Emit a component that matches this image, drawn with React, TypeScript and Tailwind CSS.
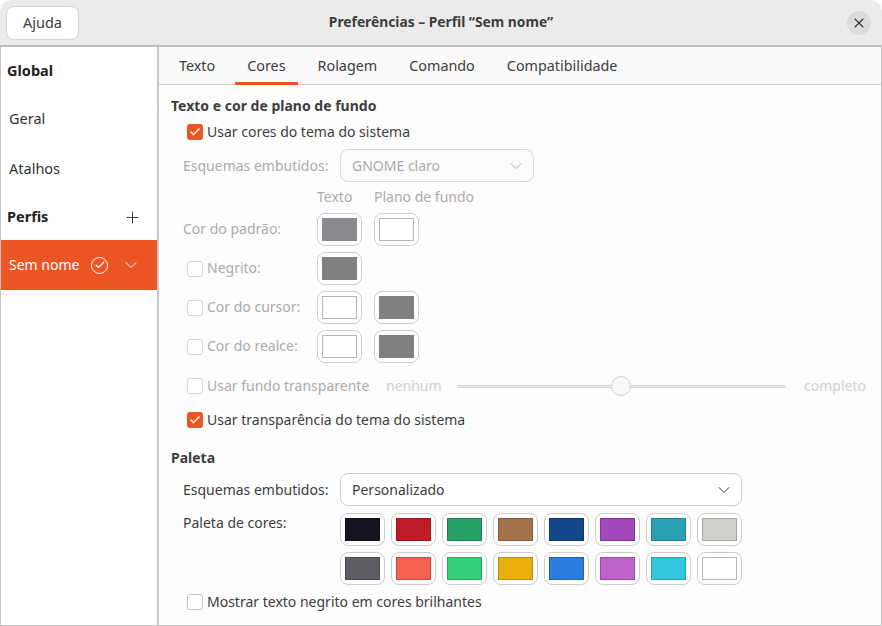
import { Check, ChevronDown, Plus, X } from "lucide-react";

const darkPalette = [
  ["bg-[#171421]", "border-[#121019]"],
  ["bg-[#c01c28]", "border-[#9a1620]"],
  ["bg-[#26a269]", "border-[#1e8254]"],
  ["bg-[#a2734c]", "border-[#825c3d]"],
  ["bg-[#12488b]", "border-[#0e3a6f]"],
  ["bg-[#a347ba]", "border-[#823995]"],
  ["bg-[#2aa1b3]", "border-[#22818f]"],
  ["bg-[#d0cfcc]", "border-[#a6a6a3]"],
];

const lightPalette = [
  ["bg-[#5e5c64]", "border-[#4b4a50]"],
  ["bg-[#f66151]", "border-[#c54e41]"],
  ["bg-[#33d17a]", "border-[#29a762]"],
  ["bg-[#e9ad0c]", "border-[#ba8a0a]"],
  ["bg-[#2a7bde]", "border-[#2262b2]"],
  ["bg-[#c061cb]", "border-[#9a4ea2]"],
  ["bg-[#33c7de]", "border-[#299fb2]"],
  ["bg-[#ffffff]", "border-[#b4b4b4]"],
];

function Swatch({ fill, edge }: { fill: string; edge: string }) {
  return (
    <div className="flex h-[33px] w-[45px] items-center justify-center rounded-lg border border-[#cdcdcd] bg-white">
      <div className={`h-[23px] w-[35px] border ${fill} ${edge}`} />
    </div>
  );
}

function Checkbox({ checked, faded }: { checked?: boolean; faded?: boolean }) {
  if (checked) {
    return (
      <div className="flex h-4 w-4 shrink-0 items-center justify-center rounded-[3px] bg-[#ed5624]">
        <Check size={12} strokeWidth={3} className="text-white" />
      </div>
    );
  }
  return (
    <div
      className={`h-4 w-4 shrink-0 rounded-[3px] border bg-white ${faded ? "border-[#d6d6d6]" : "border-[#c4c4c4]"}`}
    />
  );
}

function ColorRow({
  label,
  boxed,
  swatches,
}: {
  label: string;
  boxed?: boolean;
  swatches: string[][];
}) {
  return (
    <div className="mt-[6px] flex h-[33px] items-center">
      <div className={`flex w-[134px] items-center gap-1 text-[#ababab] ${boxed ? "pl-1" : ""}`}>
        {boxed && <Checkbox faded />}
        <span className="pb-[3px]">{label}</span>
      </div>
      <div className="flex gap-3">
        {swatches.map(([fill, edge], i) => (
          <Swatch key={i} fill={fill} edge={edge} />
        ))}
      </div>
    </div>
  );
}

const gray = ["bg-[#7f7f7f]", "border-[#7f7f7f]"];
const blank = ["bg-white", "border-[#b4b4b4]"];

export default function App() {
  return (
    <div
      className="flex h-[626px] w-[882px] flex-col overflow-hidden rounded-t-xl bg-white text-[14px] text-[#3d3d3d]"
      style={{ fontFamily: '"Noto Sans", sans-serif' }}
    >
      <header className="grid h-[47px] shrink-0 grid-cols-[1fr_auto_1fr] items-center border-b-2 border-[#bfbfbf] bg-[#ebebeb] px-[6px]">
        <button className="h-[34px] w-[73px] rounded-lg border border-[#d2d2d2] bg-white text-[14.5px] text-[#3d3d3d]">
          Ajuda
        </button>
        <h1 className="text-[13.8px] font-bold text-[#3d3d3d]">Preferências – Perfil “Sem nome”</h1>
        <div className="mr-[5px] flex h-6 w-6 items-center justify-center justify-self-end rounded-full bg-[#dcdcdc]">
          <X size={16} strokeWidth={1.6} className="text-[#333]" />
        </div>
      </header>

      <div className="flex min-h-0 flex-1 border-x border-b border-[#c4c4c4]">
        <aside className="w-[158px] shrink-0 border-r-2 border-[#c8c8c8] bg-white text-[14.5px]">
          <div className="flex h-[47px] items-center pl-[6px] font-bold text-[#222]">Global</div>
          <div className="flex h-[50px] items-center pl-2 text-[#333]">Geral</div>
          <div className="flex h-[50px] items-center pl-2 text-[#333]">Atalhos</div>
          <div className="flex h-[46px] items-center justify-between pl-[6px] pr-[15px] font-bold text-[#222]">
            Perfis
            <Plus size={19} strokeWidth={1.2} className="text-[#333]" />
          </div>
          <div className="flex h-[50px] items-center bg-[#eb5523] pl-2 text-white">
            <span className="w-[82px] pb-[2px] text-[14px]">Sem nome</span>
            <div className="flex h-[17px] w-[17px] items-center justify-center rounded-full border border-white">
              <Check size={12} strokeWidth={2.2} />
            </div>
            <ChevronDown size={20} strokeWidth={1.2} className="ml-[13px]" />
          </div>
        </aside>

        <main className="min-w-0 flex-1 bg-[#fdfdfd]">
          <nav className="flex h-[38px] items-stretch border-b border-[#cfcfcf] bg-[#fafafa] pl-1 text-[14.35px]">
            {["Texto", "Cores", "Rolagem", "Comando", "Compatibilidade"].map((tab) => (
              <div
                key={tab}
                className={`-mb-px mx-1 flex items-center border-b-[3px] px-3 pt-[3px] text-[#3d3d3d] ${tab === "Cores" ? "border-[#eb5523]" : "border-transparent"}`}
              >
                {tab}
              </div>
            ))}
          </nav>

          <section className="pl-3 pt-[10px]">
            <h2 className="flex h-[22px] items-center pb-[2px] font-bold text-[#3d3d3d]">Texto e cor de plano de fundo</h2>
            <div className="mt-[4px] flex h-[22px] items-center gap-1 pl-4">
              <Checkbox checked />
              <span className="pb-[2px]">Usar cores do tema do sistema</span>
            </div>

            <div className="mt-[6px] pl-3">
              <div className="flex h-[33px] items-center">
                <span className="w-[157px] text-[#ababab]">Esquemas embutidos:</span>
                <div className="flex h-[33px] w-[194px] items-center justify-between rounded-lg border border-[#d8d8d8] bg-[#fbfbfb] pl-[11px] pr-[7px] text-[#ababab]">
                  GNOME claro
                  <ChevronDown size={20} strokeWidth={1.1} />
                </div>
              </div>

              <div className="mt-[5px] flex h-[21px] items-center pb-[2px] text-[#ababab]">
                <span className="w-[134px]" />
                <span className="w-[57px]">Texto</span>
                <span>Plano de fundo</span>
              </div>

              <div className="-mt-[1px]">
                <ColorRow label="Cor do padrão:" swatches={[["bg-[#8a898e]", "border-[#8a898e]"], blank]} />
                <ColorRow label="Negrito:" boxed swatches={[gray]} />
                <ColorRow label="Cor do cursor:" boxed swatches={[blank, gray]} />
                <ColorRow label="Cor do realce:" boxed swatches={[blank, gray]} />
              </div>

              <div className="mt-[12px] flex h-[22px] items-center pl-1">
                <div className="flex w-[199px] items-center gap-1 text-[#ababab]">
                  <Checkbox faded />
                  <span className="pb-[2px]">Usar fundo transparente</span>
                </div>
                <span className="w-[71px] pb-[2px] text-[#d0d0d0]">nenhum</span>
                <div className="relative h-[3px] w-[329px] rounded-full border border-[#cfcfcf] bg-[#f2f2f2]">
                  <div className="absolute -top-[10px] left-[153px] h-5 w-5 rounded-full border border-[#d0d0d0] bg-[#fafafa]" />
                </div>
                <span className="ml-[18px] pb-[2px] text-[#d0d0d0]">completo</span>
              </div>

              <div className="mt-[12px] flex h-[22px] items-center gap-1 pl-1">
                <Checkbox checked />
                <span className="pb-[2px]">Usar transparência do tema do sistema</span>
              </div>
            </div>

            <h2 className="mt-[16px] flex h-[22px] items-center pb-[2px] font-bold text-[#3d3d3d]">Paleta</h2>

            <div className="pl-3">
              <div className="mt-[4px] flex h-[33px] items-center">
                <span className="w-[157px]">Esquemas embutidos:</span>
                <div className="flex h-[33px] w-[402px] items-center justify-between rounded-lg border border-[#cdcdcd] bg-white pl-[11px] pr-[7px]">
                  Personalizado
                  <ChevronDown size={20} strokeWidth={1.2} />
                </div>
              </div>

              <div className="mt-[7px] flex">
                <span className="-mt-px w-[157px]">Paleta de cores:</span>
                <div className="flex flex-col gap-[6px]">
                  <div className="flex gap-[6px]">
                    {darkPalette.map(([fill, edge]) => (
                      <Swatch key={fill} fill={fill} edge={edge} />
                    ))}
                  </div>
                  <div className="flex gap-[6px]">
                    {lightPalette.map(([fill, edge]) => (
                      <Swatch key={fill} fill={fill} edge={edge} />
                    ))}
                  </div>
                </div>
              </div>

              <div className="mt-[6px] flex h-[22px] items-center gap-1 pl-1">
                <Checkbox />
                <span className="pb-[2px]">Mostrar texto negrito em cores brilhantes</span>
              </div>
            </div>
          </section>
        </main>
      </div>
    </div>
  );
}
